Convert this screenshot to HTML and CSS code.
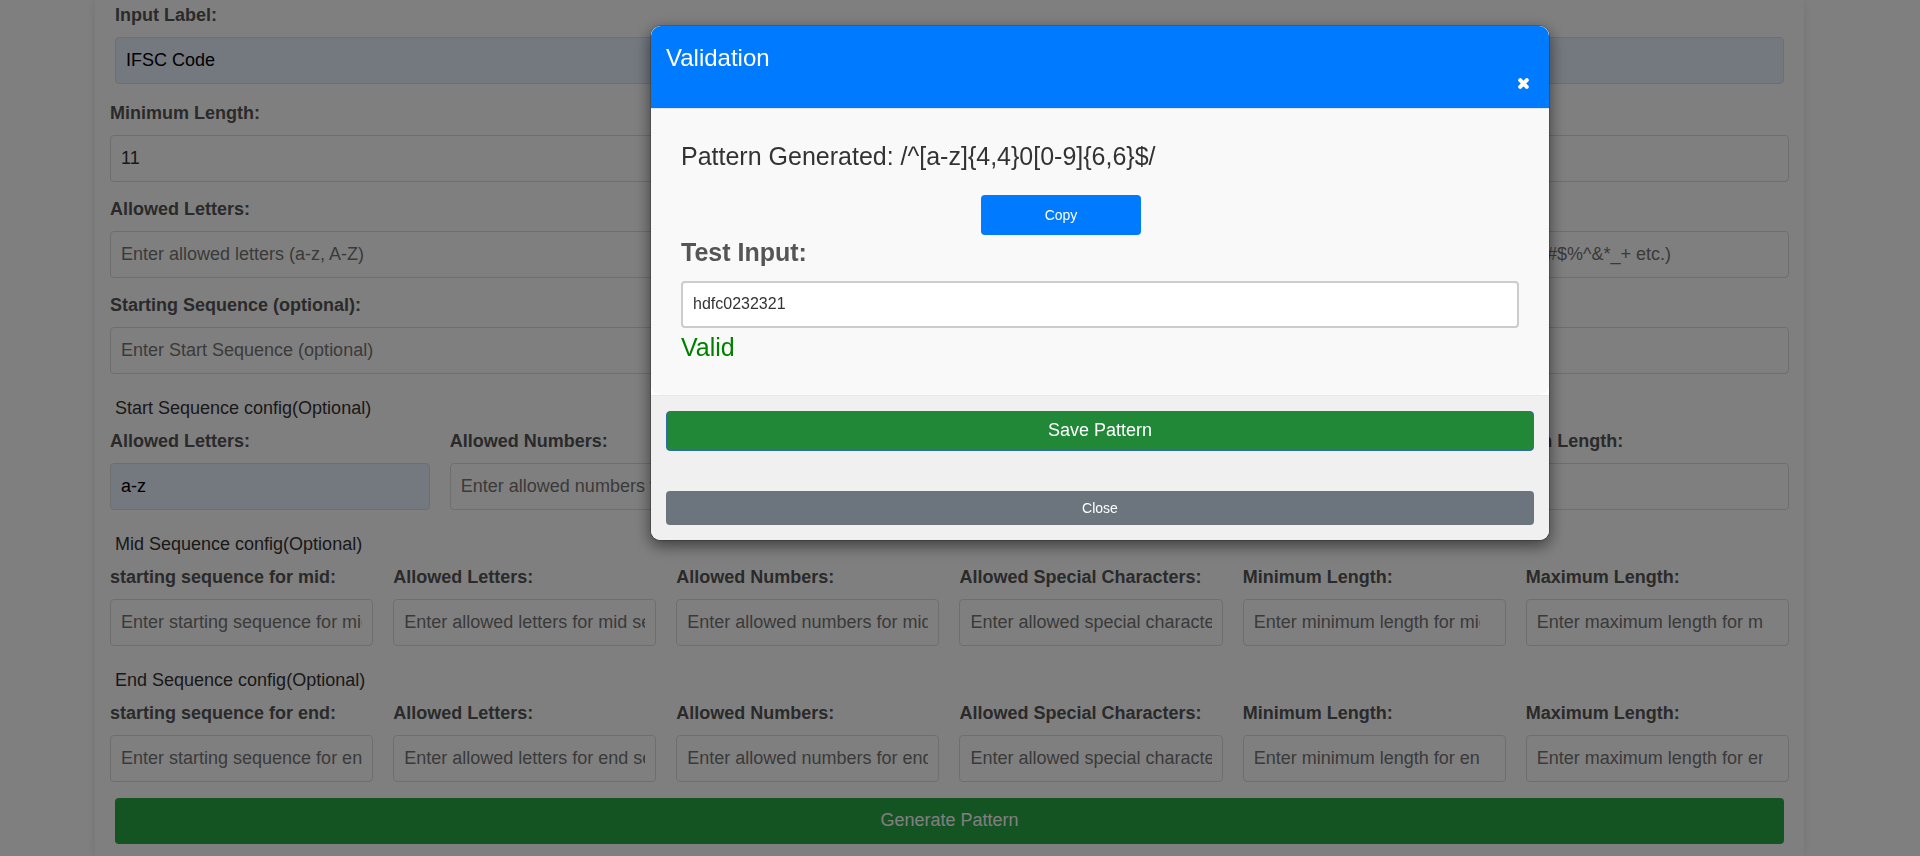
FILE: index.html
```html
<!DOCTYPE html>
<html lang="en">
<head>
<meta charset="utf-8">
<meta name="viewport" content="width=device-width, initial-scale=1">
<title>Pattern Generator</title>
<link rel="stylesheet" href="styles.css">
</head>
<body>
<main class="card">
  <form class="form">
    <div class="field field-main">
      <label for="input-label">Input Label:</label>
      <input class="filled" id="input-label" type="text" value="IFSC Code">
    </div>

    <div class="row cols-2">
      <div class="field"><label for="min">Minimum Length:</label><input id="min" type="number" value="11"></div>
      <div class="field"><label for="max">Maximum Length:</label><input id="max" type="number" value="11"></div>
    </div>

    <div class="row cols-3">
      <div class="field"><label for="letters">Allowed Letters:</label><input id="letters" type="text" placeholder="Enter allowed letters (a-z, A-Z)"></div>
      <div class="field"><label for="numbers">Allowed Numbers:</label><input id="numbers" type="text" placeholder="Enter allowed numbers (0-9)"></div>
      <div class="field"><label for="special">Allowed Special Characters:</label><input id="special" type="text" placeholder="Enter allowed special characters (!@#$%^&amp;*_+ etc.)"></div>
    </div>

    <div class="row">
      <div class="field"><label for="start">Starting Sequence (optional):</label><input id="start" type="text" placeholder="Enter Start Sequence (optional)"></div>
    </div>

    <p class="section">Start Sequence config(Optional)</p>
    <div class="row cols-5">
      <div class="field"><label for="s-letters">Allowed Letters:</label><input class="filled" id="s-letters" type="text" value="a-z"></div>
      <div class="field"><label for="s-numbers">Allowed Numbers:</label><input id="s-numbers" type="text" placeholder="Enter allowed numbers for start sequence"></div>
      <div class="field"><label for="s-special">Allowed Special Characters:</label><input id="s-special" type="text" placeholder="Enter allowed special characters"></div>
      <div class="field"><label for="s-min">Minimum Length:</label><input id="s-min" type="number" value="4"></div>
      <div class="field"><label for="s-max">Maximum Length:</label><input id="s-max" type="number" value="4"></div>
    </div>

    <p class="section">Mid Sequence config(Optional)</p>
    <div class="row cols-6">
      <div class="field"><label for="m-start">starting sequence for mid:</label><input id="m-start" type="text" placeholder="Enter starting sequence for mid sequence"></div>
      <div class="field"><label for="m-letters">Allowed Letters:</label><input id="m-letters" type="text" placeholder="Enter allowed letters for mid sequence"></div>
      <div class="field"><label for="m-numbers">Allowed Numbers:</label><input id="m-numbers" type="text" placeholder="Enter allowed numbers for mid sequence"></div>
      <div class="field"><label for="m-special">Allowed Special Characters:</label><input id="m-special" type="text" placeholder="Enter allowed special characters for mid sequence"></div>
      <div class="field"><label for="m-min">Minimum Length:</label><input id="m-min" type="number" placeholder="Enter minimum length for mid sequence"></div>
      <div class="field"><label for="m-max">Maximum Length:</label><input id="m-max" type="number" placeholder="Enter maximum length for mid sequence"></div>
    </div>

    <p class="section">End Sequence config(Optional)</p>
    <div class="row cols-6">
      <div class="field"><label for="e-start">starting sequence for end:</label><input id="e-start" type="text" placeholder="Enter starting sequence for end sequence"></div>
      <div class="field"><label for="e-letters">Allowed Letters:</label><input id="e-letters" type="text" placeholder="Enter allowed letters for end sequence"></div>
      <div class="field"><label for="e-numbers">Allowed Numbers:</label><input id="e-numbers" type="text" placeholder="Enter allowed numbers for end sequence"></div>
      <div class="field"><label for="e-special">Allowed Special Characters:</label><input id="e-special" type="text" placeholder="Enter allowed special characters for end sequence"></div>
      <div class="field"><label for="e-min">Minimum Length:</label><input id="e-min" type="number" placeholder="Enter minimum length for end sequence"></div>
      <div class="field"><label for="e-max">Maximum Length:</label><input id="e-max" type="number" placeholder="Enter maximum length for end sequence"></div>
    </div>

    <button class="generate" type="button">Generate Pattern</button>
  </form>
</main>

<div class="overlay">
  <section class="modal" role="dialog" aria-modal="true" aria-labelledby="modal-title">
    <header class="modal-header">
      <h2 class="modal-title" id="modal-title">Validation</h2>
      <button class="dismiss" type="button" aria-label="Close dialog">
        <svg class="dismiss-icon" viewBox="0 0 11 11" aria-hidden="true"><path d="M2.2 2.2 8.8 8.8M8.8 2.2 2.2 8.8"/></svg>
      </button>
    </header>
    <div class="modal-body">
      <p class="pattern">Pattern Generated: /^[a-z]{4,4}0[0-9]{6,6}$/</p>
      <button class="copy" type="button">Copy</button>
      <label class="test-label" for="test">Test Input:</label>
      <input class="test-input" id="test" type="text" value="hdfc0232321">
      <p class="result">Valid</p>
    </div>
    <footer class="modal-footer">
      <button class="save" type="button">Save Pattern</button>
      <button class="close" type="button">Close</button>
    </footer>
  </section>
</div>
</body>
</html>
```
FILE: styles.css
```css
* {
  box-sizing: border-box;
}

body {
  margin: 0;
  overflow: hidden;
  background: #fff;
  color: #333;
  font-family: "Liberation Sans", Arial, sans-serif;
  font-size: 18px;
  line-height: 27px;
}

p,
h2 {
  margin: 0;
}

input,
button {
  font: inherit;
}

button {
  padding: 0;
  border: 0;
  border-radius: 4px;
  color: #fff;
  cursor: pointer;
}

/* Form */

.card {
  min-height: 100vh;
  margin: 0 116px 0 95px;
  padding: 2px 15px 12px;
  background: #fff;
  box-shadow: 0 0 10px rgba(0, 0, 0, 0.1);
}

.field {
  display: flex;
  flex-direction: column;
  gap: 8px;
  min-width: 0;
}

.field label {
  color: #555;
  font-weight: bold;
}

.field input {
  width: 100%;
  height: 47px;
  padding: 9px 10px;
  border: 1px solid #ddd;
  border-radius: 4px;
  background: #fff;
  color: #333;
}

.field input::placeholder {
  color: #757575;
}

.field .filled {
  background: #e8f0fe;
  color: #000;
}

.field-main {
  margin: 0 5px 16px;
}

.row {
  display: grid;
  gap: 20px;
  margin-bottom: 14px;
}

.cols-2 { grid-template-columns: repeat(2, 1fr); }
.cols-3 { grid-template-columns: repeat(3, 1fr); }
.cols-5 { grid-template-columns: repeat(5, 1fr); }
.cols-6 { grid-template-columns: repeat(6, 1fr); }

.section {
  padding: 7px 5px 6px;
}

.generate {
  display: block;
  width: calc(100% - 10px);
  height: 46px;
  margin: 16px 5px 0;
  padding-bottom: 2px;
  background: #28a745;
}

/* Dialog */

.overlay {
  position: fixed;
  inset: 0;
  display: flex;
  justify-content: center;
  align-items: flex-start;
  padding: 25px 0 0 280px;
  background: rgba(0, 0, 0, 0.5);
}

.modal {
  width: 900px;
  max-width: 100%;
  border: 1px solid rgba(0, 0, 0, 0.2);
  border-radius: 10px;
  background: #fff;
  background-clip: padding-box;
  box-shadow: 0 5px 15px rgba(0, 0, 0, 0.5);
}

.modal-header {
  display: flex;
  flex-direction: column;
  padding: 15px;
  border-bottom: 1px solid #e5e5e5;
  border-radius: 10px 10px 0 0;
  background: #007bff;
}

.modal-title {
  color: #fff;
  font-size: 24px;
  font-weight: normal;
  line-height: 34px;
}

.dismiss {
  display: grid;
  place-items: center;
  align-self: flex-end;
  width: 21px;
  height: 18px;
  padding-bottom: 1px;
  background: transparent;
}

.dismiss-icon {
  width: 11px;
  height: 11px;
  fill: none;
  stroke: #fff;
  stroke-width: 4;
  stroke-linecap: round;
}

.modal-body {
  display: flex;
  flex-direction: column;
  padding: 30px;
  border-radius: 0 0 10px 10px;
  background: #f9f9f9;
  font-size: 25px;
  line-height: 34px;
}

.copy {
  width: 160px;
  height: 40px;
  margin: 22px 0 0 300px;
  background: #007bff;
  font-size: 14px;
}

.test-label {
  color: #555;
  font-weight: bold;
}

.test-input {
  height: 47px;
  margin: 12px 0 2px;
  padding: 8px 10px 10px;
  border: 2px solid #ccc;
  border-radius: 4px;
  background: #fff;
  color: #333;
  font-size: 16px;
}

.result {
  padding-bottom: 1px;
  color: green;
}

.modal-footer {
  display: flex;
  flex-direction: column;
  gap: 40px;
  padding: 15px;
  border-top: 1px solid #e9e9e9;
  border-radius: 0 0 10px 10px;
  background: #f0f0f0;
}

.save {
  height: 40px;
  padding-bottom: 2px;
  border: 1px solid #2e6da4;
  background: #218838;
}

.close {
  height: 34px;
  background: #6c757d;
  font-size: 14px;
}
```
